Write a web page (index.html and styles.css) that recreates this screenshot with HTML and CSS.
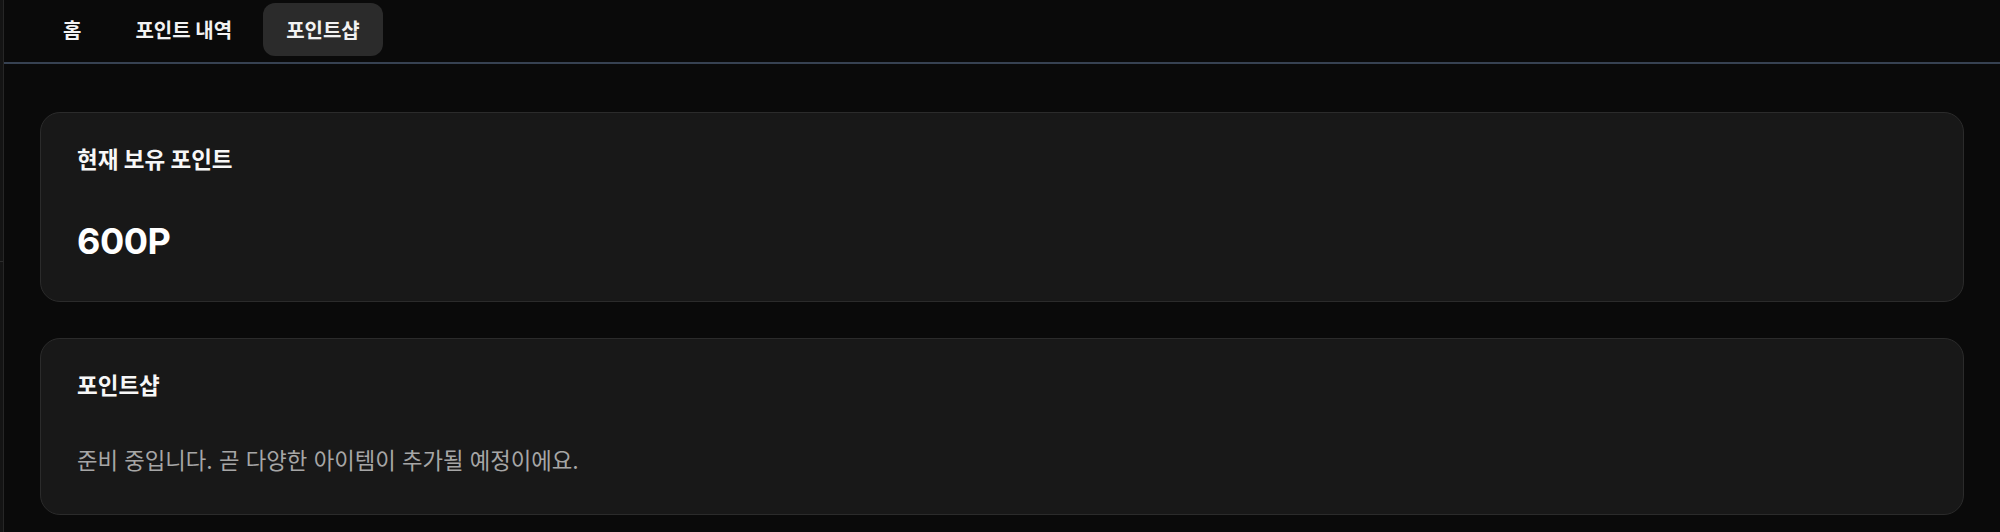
FILE: index.html
```html
<!DOCTYPE html>
<html lang="ko">
<head>
<meta charset="utf-8">
<title>포인트샵</title>
<link rel="stylesheet" href="styles.css">
</head>
<body>
<div class="layout">
  <aside class="rail">
    <div class="rail-top"></div>
    <div class="rail-bottom"></div>
  </aside>
  <div class="main">
    <nav class="tabs">
      <a class="tab">홈</a>
      <a class="tab">포인트 내역</a>
      <a class="tab active">포인트샵</a>
    </nav>
    <div class="content">
      <section class="card">
        <h2 class="card-title">현재 보유 포인트</h2>
        <div class="points">600P</div>
      </section>
      <section class="card">
        <h2 class="card-title">포인트샵</h2>
        <p class="card-text">준비 중입니다. 곧 다양한 아이템이 추가될 예정이에요.</p>
      </section>
    </div>
  </div>
</div>
</body>
</html>
```
FILE: styles.css
```css
* { box-sizing: border-box; }
html, body { margin: 0; padding: 0; }
body {
  background: #0a0a0a;
  color: #f5f5f5;
  font-family: Inter, "Noto Sans CJK KR", sans-serif;
  height: 532px;
  overflow: hidden;
}
.layout { display: flex; height: 532px; }
.rail {
  width: 4px;
  flex: none;
  display: flex;
  flex-direction: column;
  background: #141414;
  border-right: 1px solid #262626;
}
.rail-top { height: 262px; border-bottom: 1px solid #2c2c2c; }
.rail-bottom { flex: 1; }
.main { flex: 1; display: flex; flex-direction: column; }
.tabs {
  display: flex;
  gap: 8px;
  padding: 3px 36px 6px;
  border-bottom: 2px solid #374252;
}
.tab {
  display: flex;
  align-items: center;
  height: 53px;
  padding: 0 23px;
  border-radius: 12px;
  font-size: 20px;
  font-weight: 700;
  color: #f2f2f2;
}
.tab.active { background: #2b2b2b; }
.content {
  padding: 48px 36px 0;
  display: flex;
  flex-direction: column;
  gap: 36px;
}
.card {
  background: #181818;
  border: 1px solid #2b2b2b;
  border-radius: 20px;
  padding: 32px 36px 38px;
}
.card-title {
  margin: 0 0 45px;
  font-size: 22.5px;
  line-height: 30px;
  font-weight: 700;
  color: #f7f7f7;
}
.points {
  font-size: 36px;
  line-height: 43px;
  font-weight: 700;
  color: #ffffff;
  letter-spacing: -0.5px;
}
.card-text {
  margin: 2px 0 0;
  font-size: 22.3px;
  line-height: 30px;
  color: #a6a6a6;
}
```
